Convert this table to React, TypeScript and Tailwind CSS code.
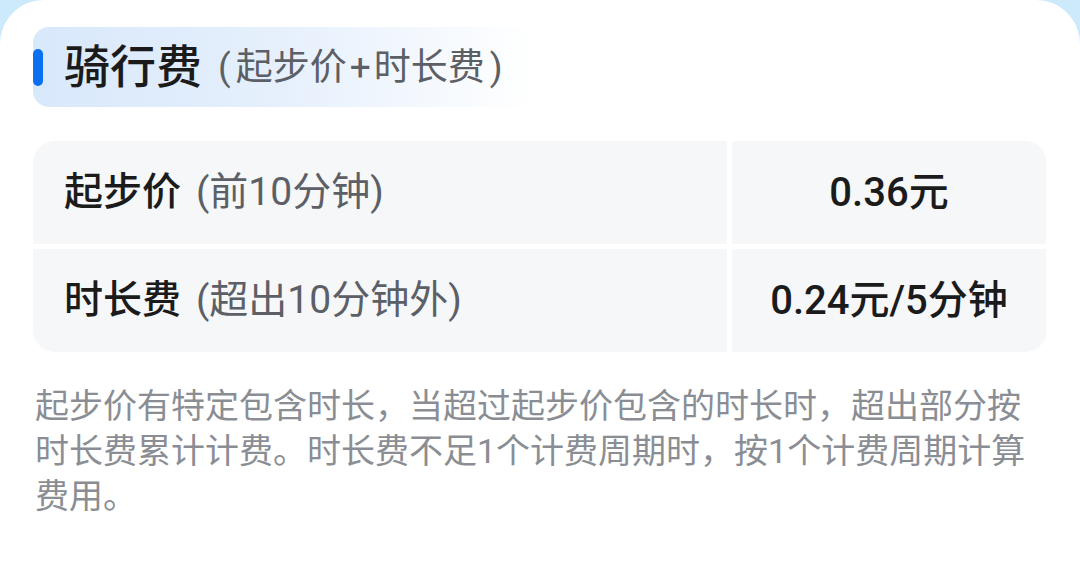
import React from "react";

const FONT = { fontFamily: '"Roboto", "Noto Sans CJK SC", sans-serif' };

export default function App() {
  return (
    <div className="w-[1080px] h-[584px] bg-[#cde9fc] overflow-hidden" style={FONT}>
      <div className="h-full bg-white rounded-t-[44px] pt-[27px] px-[33px]">
        <div className="h-[80px] w-[500px] rounded-[16px] bg-gradient-to-r from-[#d8e8fb] via-[#e6f0fc] to-white flex items-center">
          <div className="w-[10px] h-[37px] rounded-full bg-[#0b6ff2]" />
          <span className="ml-[21px] text-[46px] font-medium text-[#1b1b1b] leading-none">骑行费</span>
          <span className="ml-[16px] text-[37px] text-[#5c5f66] leading-none flex items-center">
            <span className="mr-[5px]">(</span>
            <span>起步价</span>
            <span className="mx-[3px]">+</span>
            <span>时长费</span>
            <span className="ml-[5px]">)</span>
          </span>
        </div>

        <div className="mt-[34px] grid grid-cols-[694px_314px] gap-[5px] rounded-[22px] overflow-hidden">
          <div className="h-[103px] bg-[#f6f7f9] flex items-center pl-[31px] text-[39px] leading-none">
            <span className="font-medium text-[#1b1b1b]">起步价</span>
            <span className="ml-[15px] text-[#5c5f66]">(前10分钟)</span>
          </div>
          <div className="h-[103px] bg-[#f6f7f9] flex items-center justify-center text-[40px] leading-none font-medium text-[#1b1b1b]">
            0.36元
          </div>
          <div className="h-[103px] bg-[#f6f7f9] flex items-center pl-[31px] text-[39px] leading-none">
            <span className="font-medium text-[#1b1b1b]">时长费</span>
            <span className="ml-[15px] text-[#5c5f66]">(超出10分钟外)</span>
          </div>
          <div className="h-[103px] bg-[#f6f7f9] flex items-center justify-center text-[40px] leading-none font-medium text-[#1b1b1b]">
            0.24元/5分钟
          </div>
        </div>

        <p className="mt-[32px] pl-[2px] w-[1010px] text-[34px] leading-[45px] text-[#8a8e94]">
          起步价有特定包含时长，当超过起步价包含的时长时，超出部分按时长费累计计费。时长费不足1个计费周期时，按1个计费周期计算费用。
        </p>
      </div>
    </div>
  );
}
